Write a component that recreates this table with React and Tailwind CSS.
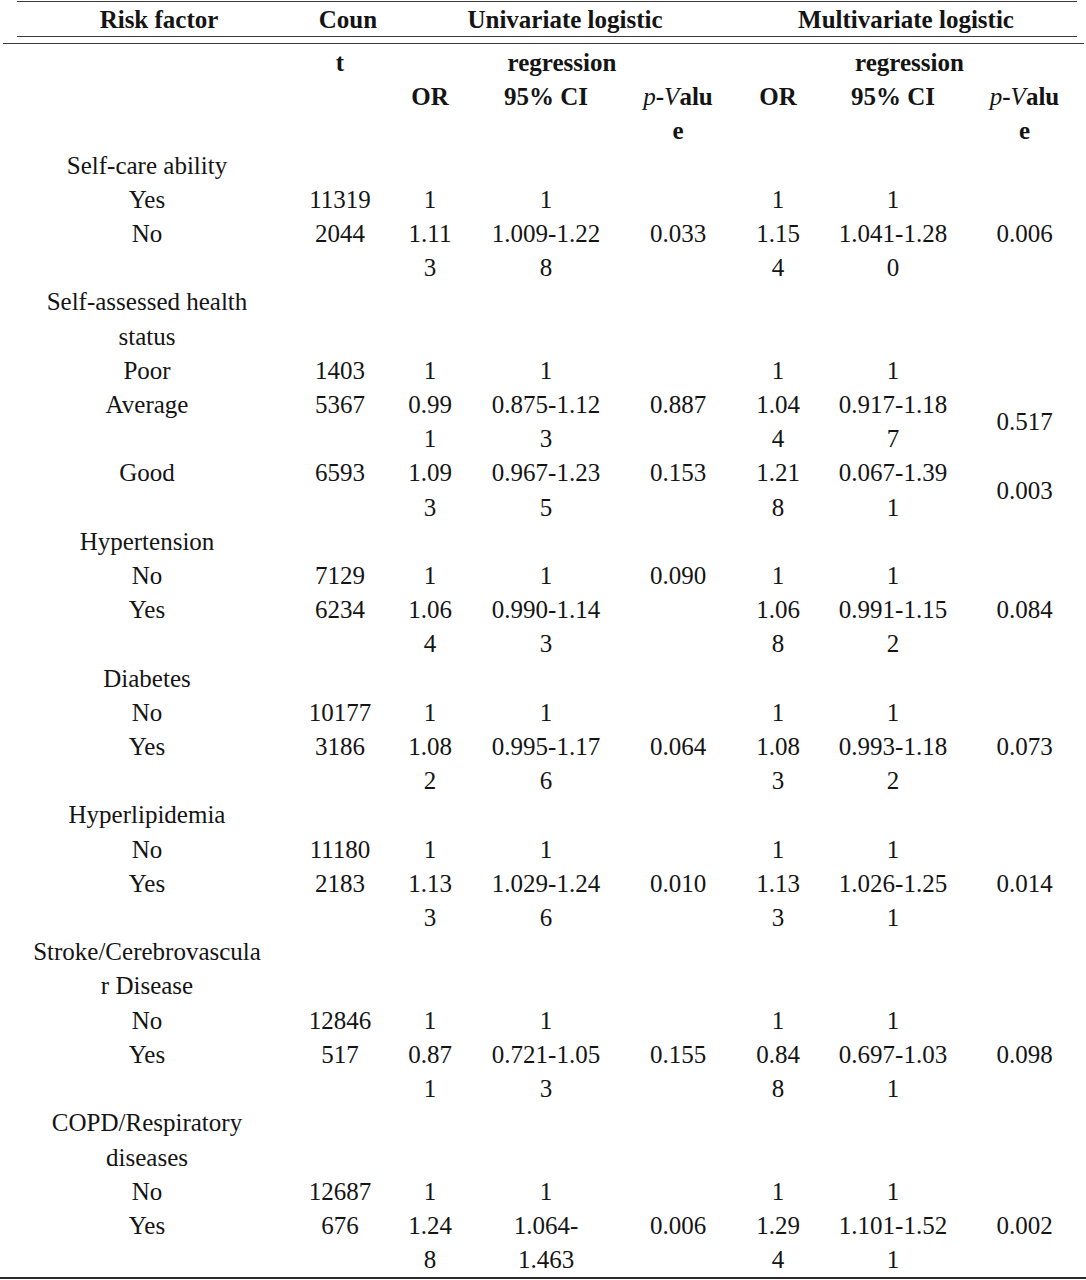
const COLS = "grid grid-cols-[288px_98px_82px_150px_114px_86px_144px_119px]";

const ROWS = [
  { label: ["Self-care ability"] },
  { label: ["Yes"], cells: ["11319", "1", "1", "", "1", "1", ""] },
  { label: ["No"], cells: ["2044", ["1.11", "3"], ["1.009-1.22", "8"], "0.033", ["1.15", "4"], ["1.041-1.28", "0"], "0.006"] },
  { label: ["Self-assessed health", "status"] },
  { label: ["Poor"], cells: ["1403", "1", "1", "", "1", "1", ""] },
  { label: ["Average"], cells: ["5367", ["0.99", "1"], ["0.875-1.12", "3"], "0.887", ["1.04", "4"], ["0.917-1.18", "7"], "0.517"], mid: true },
  { label: ["Good"], cells: ["6593", ["1.09", "3"], ["0.967-1.23", "5"], "0.153", ["1.21", "8"], ["0.067-1.39", "1"], "0.003"], mid: true },
  { label: ["Hypertension"] },
  { label: ["No"], cells: ["7129", "1", "1", "0.090", "1", "1", ""] },
  { label: ["Yes"], cells: ["6234", ["1.06", "4"], ["0.990-1.14", "3"], "", ["1.06", "8"], ["0.991-1.15", "2"], "0.084"] },
  { label: ["Diabetes"] },
  { label: ["No"], cells: ["10177", "1", "1", "", "1", "1", ""] },
  { label: ["Yes"], cells: ["3186", ["1.08", "2"], ["0.995-1.17", "6"], "0.064", ["1.08", "3"], ["0.993-1.18", "2"], "0.073"] },
  { label: ["Hyperlipidemia"] },
  { label: ["No"], cells: ["11180", "1", "1", "", "1", "1", ""] },
  { label: ["Yes"], cells: ["2183", ["1.13", "3"], ["1.029-1.24", "6"], "0.010", ["1.13", "3"], ["1.026-1.25", "1"], "0.014"] },
  { label: ["Stroke/Cerebrovascula", "r Disease"] },
  { label: ["No"], cells: ["12846", "1", "1", "", "1", "1", ""] },
  { label: ["Yes"], cells: ["517", ["0.87", "1"], ["0.721-1.05", "3"], "0.155", ["0.84", "8"], ["0.697-1.03", "1"], "0.098"] },
  { label: ["COPD/Respiratory", "diseases"] },
  { label: ["No"], cells: ["12687", "1", "1", "", "1", "1", ""] },
  { label: ["Yes"], cells: ["676", ["1.24", "8"], ["1.064-", "1.463"], "0.006", ["1.29", "4"], ["1.101-1.52", "1"], "0.002"] },
];

function Lines({ value, className = "" }) {
  const lines = Array.isArray(value) ? value : [value];
  return (
    <div className={`flex flex-col text-center ${className}`}>
      {lines.map((l, i) => (
        <span key={i} className="whitespace-nowrap">{l || "\u00a0"}</span>
      ))}
    </div>
  );
}

function PValue() {
  return (
    <span>
      <i className="font-normal">p</i>-<i className="font-normal">V</i>alu
    </span>
  );
}

export default function App() {
  return (
    <div className="w-[1086px] bg-white pt-px font-['Liberation_Serif',serif] text-[25px] leading-[34.2px] text-[#141414]">
      {/* top header */}
      <div className="ml-[17px] flex h-[36px] w-[1060px] items-center border-y border-[#3a3a3a] pt-[2px] font-bold">
        <div className="w-[284px] text-center">Risk factor</div>
        <div className="w-[94px] text-center">Coun</div>
        <div className="w-[340px] text-center">Univariate logistic</div>
        <div className="w-[342px] text-center">Multivariate logistic</div>
      </div>
      <div className="ml-[3px] mt-[6px] w-[1081px] border-t border-[#3a3a3a]" />

      <div className="ml-[3px] mt-[2px] w-[1081px]">
        <div className={`${COLS} font-bold`}>
          <div />
          <Lines value={["t", "", ""]} />
          <div className="col-span-3 flex flex-col">
            <div className="text-center">regression</div>
            <div className="grid grid-cols-[82px_150px_114px] text-center">
              <span>OR</span>
              <span>95% CI</span>
              <span><PValue /></span>
              <span />
              <span />
              <span>e</span>
            </div>
          </div>
          <div className="col-span-3 flex flex-col">
            <div className="text-center">regression</div>
            <div className="grid grid-cols-[86px_144px_119px] text-center">
              <span>OR</span>
              <span>95% CI</span>
              <span><PValue /></span>
              <span />
              <span />
              <span>e</span>
            </div>
          </div>
        </div>

        {ROWS.map((row, i) => (
          <div key={i} className={COLS}>
            <Lines value={row.label} />
            {row.cells &&
              row.cells.map((c, j) => (
                <Lines
                  key={j}
                  value={c}
                  className={row.mid && j === 6 ? "self-center" : "self-start"}
                />
              ))}
          </div>
        ))}
      </div>
      <div className="h-[2px] w-[1086px] bg-[#2a2a2a]" />
    </div>
  );
}
